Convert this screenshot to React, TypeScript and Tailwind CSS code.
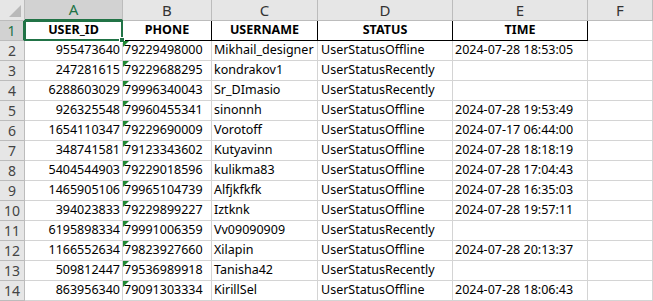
import React from 'react';

type Row = [string, string, string, string, string];

const ROWS: Row[] = [
  ['955473640', '79229498000', 'Mikhail_designer', 'UserStatusOffline', '2024-07-28 18:53:05'],
  ['247281615', '79229688295', 'kondrakov1', 'UserStatusRecently', ''],
  ['6288603029', '79996340043', 'Sr_DImasio', 'UserStatusRecently', ''],
  ['926325548', '79960455341', 'sinonnh', 'UserStatusOffline', '2024-07-28 19:53:49'],
  ['1654110347', '79229690009', 'Vorotoff', 'UserStatusOffline', '2024-07-17 06:44:00'],
  ['348741581', '79123343602', 'Kutyavinn', 'UserStatusOffline', '2024-07-28 18:18:19'],
  ['5404544903', '79229018596', 'kulikma83', 'UserStatusOffline', '2024-07-28 17:04:43'],
  ['1465905106', '79965104739', 'Alfjkfkfk', 'UserStatusOffline', '2024-07-28 16:35:03'],
  ['394023833', '79229899227', 'Iztknk', 'UserStatusOffline', '2024-07-28 19:57:11'],
  ['6195898334', '79991006359', 'Vv09090909', 'UserStatusRecently', ''],
  ['1166552634', '79823927660', 'Xilapin', 'UserStatusOffline', '2024-07-28 20:13:37'],
  ['509812447', '79536989918', 'Tanisha42', 'UserStatusRecently', ''],
  ['863956340', '79091303334', 'KirillSel', 'UserStatusOffline', '2024-07-28 18:06:43'],
];

const HEADERS = ['USER_ID', 'PHONE', 'USERNAME', 'STATUS', 'TIME'];
const COLS = ['A', 'B', 'C', 'D', 'E', 'F'];

const cell = 'h-[20px] border-r border-b border-[#d4d4d4] overflow-hidden whitespace-nowrap flex items-center';

const TextFlag = () => (
  <svg className="absolute left-0 top-0" width="6" height="6" viewBox="0 0 6 6">
    <polygon points="0,0 6,0 0,6" fill="#1f8a34" />
  </svg>
);

export default function App() {
  return (
    <div
      className="w-[653px] h-[301px] overflow-hidden bg-white text-[12.5px] text-black"
      style={{ fontFamily: '"Noto Sans", "Open Sans", sans-serif' }}
    >
      <div className="grid grid-cols-[25px_98px_89px_106px_135px_135px_1fr]">
        {/* column headers */}
        <div className="h-[21px] bg-[#e6e6e6] border-r border-b border-[#bcbcbc] relative">
          <svg className="absolute right-[3px] bottom-[3px]" width="12" height="12" viewBox="0 0 12 12">
            <polygon points="12,0 12,12 0,12" fill="#b9b9b9" />
          </svg>
        </div>
        {COLS.map((c, i) => (
          <div
            key={c}
            className={
              i === 0
                ? 'h-[21px] bg-[#d2d2d2] border-r border-[#bcbcbc] border-b-2 border-b-[#217346] flex items-center justify-center text-[15px] text-[#217346]'
                : 'h-[21px] bg-[#e6e6e6] border-r border-b border-[#bcbcbc] flex items-center justify-center text-[15px] text-[#333333]'
            }
          >
            {c}
          </div>
        ))}

        {/* row 1 */}
        <div className="h-[20px] bg-[#d2d2d2] border-r-2 border-r-[#217346] border-b border-b-[#bcbcbc] flex items-center justify-center text-[14px] text-[#217346]">
          1
        </div>
        {HEADERS.map((h, i) => (
          <div
            key={h}
            className={`h-[20px] border-b border-r border-black flex items-center justify-center font-bold whitespace-nowrap ${
              i === 0 ? 'relative border-r-[#d4d4d4]' : ''
            }`}
          >
            {h}
            {i === 0 && (
              <div className="absolute -inset-[1px] border-2 border-[#217346]">
                <div className="absolute -right-[4px] -bottom-[4px] w-[6px] h-[6px] bg-[#217346] border border-white" />
              </div>
            )}
          </div>
        ))}
        <div className={cell} />

        {ROWS.map((r, idx) => (
          <React.Fragment key={idx}>
            <div className="h-[20px] bg-[#e6e6e6] border-r border-b border-[#bcbcbc] flex items-center justify-center text-[14px] text-[#444444]">
              {idx + 2}
            </div>
            <div className={`${cell} justify-end pr-[2px]`}>{r[0]}</div>
            <div className={`${cell} relative pl-[1px]`}>
              <TextFlag />
              {r[1]}
            </div>
            <div className={`${cell} pl-[2px]`}>{r[2]}</div>
            <div className={`${cell} pl-[3px]`}>{r[3]}</div>
            <div className={`${cell} pl-[2px]`}>{r[4]}</div>
            <div className={cell} />
          </React.Fragment>
        ))}
      </div>
    </div>
  );
}
